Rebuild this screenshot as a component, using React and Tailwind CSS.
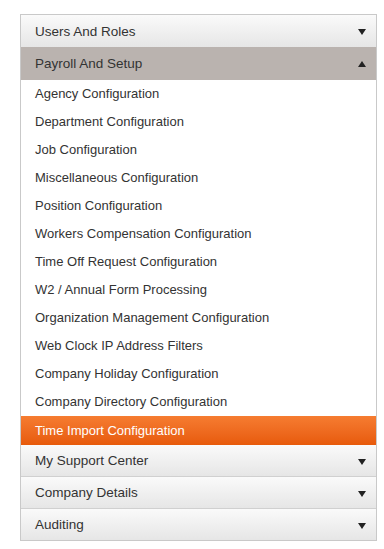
import React from "react";

const items = [
  "Agency Configuration",
  "Department Configuration",
  "Job Configuration",
  "Miscellaneous Configuration",
  "Position Configuration",
  "Workers Compensation Configuration",
  "Time Off Request Configuration",
  "W2 / Annual Form Processing",
  "Organization Management Configuration",
  "Web Clock IP Address Filters",
  "Company Holiday Configuration",
  "Company Directory Configuration",
];

function Down() {
  return (
    <svg width="8" height="6" viewBox="0 0 8 6" className="shrink-0">
      <path d="M0 0 H8 L4 6 Z" fill="#222" />
    </svg>
  );
}
function Up() {
  return (
    <svg width="8" height="6" viewBox="0 0 8 6" className="shrink-0">
      <path d="M0 6 H8 L4 0 Z" fill="#222" />
    </svg>
  );
}

function Header({ label, className = "" }) {
  return (
    <div
      className={`flex items-center justify-between pl-[14px] pr-[10px] pt-[2px] bg-gradient-to-b from-[#fafafa] to-[#e6e6e6] text-[#333] text-[13.5px] ${className}`}
    >
      <span>{label}</span>
      <Down />
    </div>
  );
}

export default function App() {
  return (
    <div
      className="w-[384px] h-[549px] bg-white pt-[14px] pl-[20px] text-[13px]"
      style={{ fontFamily: '"Liberation Sans", Arial, sans-serif' }}
    >
      <div className="w-[357px] border border-[#c9c9c9]">
        <Header label="Users And Roles" className="h-[32px]" />
        <div className="h-[33px] flex items-center justify-between pl-[14px] pr-[10px] pt-[1px] bg-[#bab3af] text-[#333] text-[13.5px]">
          <span>Payroll And Setup</span>
          <Up />
        </div>
        {items.map((t) => (
          <div key={t} className="h-[28px] flex items-center pl-[14px] text-[#333] bg-white">
            {t}
          </div>
        ))}
        <div className="h-[29px] flex items-center pl-[14px] text-white bg-gradient-to-b from-[#f67c30] to-[#e75a0a]">
          Time Import Configuration
        </div>
        <Header label="My Support Center" className="h-[32px] border-b border-[#d0d0d0]" />
        <Header label="Company Details" className="h-[32px] border-b border-[#d0d0d0]" />
        <Header label="Auditing" className="h-[31px]" />
      </div>
    </div>
  );
}
